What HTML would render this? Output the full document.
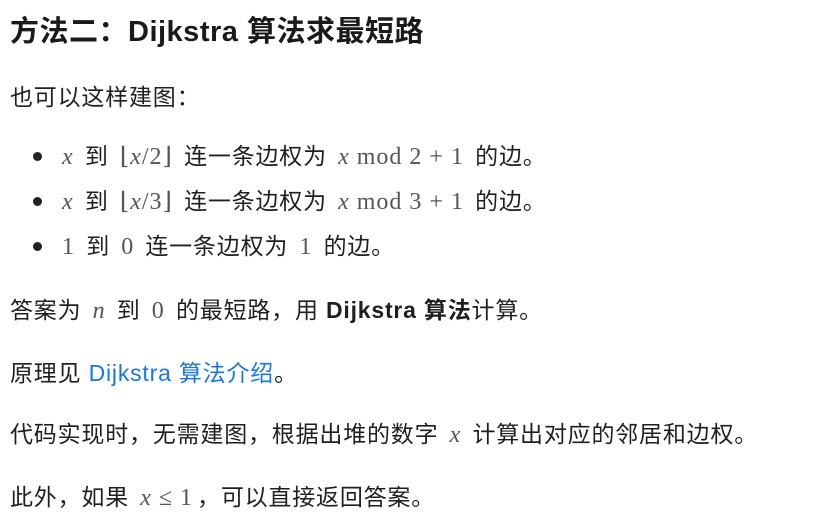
<!DOCTYPE html>
<html><head><meta charset="utf-8"><style>
body{margin:0;width:826px;height:515px;background:#fff;overflow:hidden;font-family:"Liberation Sans","Noto Sans CJK SC",sans-serif;color:#1f1f1f;font-size:23px;letter-spacing:0.8px}
.l{position:absolute;left:10px;white-space:nowrap;line-height:30px}
.m{font-family:"Liberation Serif","DejaVu Serif",serif;color:#555;font-size:24px;letter-spacing:1px;margin:0 4px}
.b{position:absolute;left:33px;width:9px;height:9px;border-radius:50%;background:#222}
h1{position:absolute;left:10px;top:13px;margin:0;font-size:29px;font-weight:bold;line-height:38px;color:#1a1a1a;letter-spacing:0.5px}
a{color:#1677e6;text-decoration:none}
</style></head><body>
<h1>方法二：Dijkstra 算法求最短路</h1>
<div class="l" style="top:82px">也可以这样建图：</div>
<div class="b" style="top:152px"></div>
<div class="l" style="top:141px;left:58px"><span class="m"><i>x</i></span> 到 <span class="m">⌊<i>x</i>/2⌋</span> 连一条边权为 <span class="m"><i>x</i> mod 2 + 1</span> 的边。</div>
<div class="b" style="top:197px"></div>
<div class="l" style="top:186px;left:58px"><span class="m"><i>x</i></span> 到 <span class="m">⌊<i>x</i>/3⌋</span> 连一条边权为 <span class="m"><i>x</i> mod 3 + 1</span> 的边。</div>
<div class="b" style="top:242px"></div>
<div class="l" style="top:231px;left:58px"><span class="m">1</span> 到 <span class="m">0</span> 连一条边权为 <span class="m">1</span> 的边。</div>
<div class="l" style="top:295px">答案为 <span class="m"><i>n</i></span> 到 <span class="m">0</span> 的最短路，用 <b>Dijkstra 算法</b>计算。</div>
<div class="l" style="top:358px">原理见 <a>Dijkstra 算法介绍</a>。</div>
<div class="l" style="top:419px">代码实现时，无需建图，根据出堆的数字 <span class="m"><i>x</i></span> 计算出对应的邻居和边权。</div>
<div class="l" style="top:482px">此外，如果 <span class="m"><i>x</i> ≤ 1</span>，可以直接返回答案。</div>
</body></html>
